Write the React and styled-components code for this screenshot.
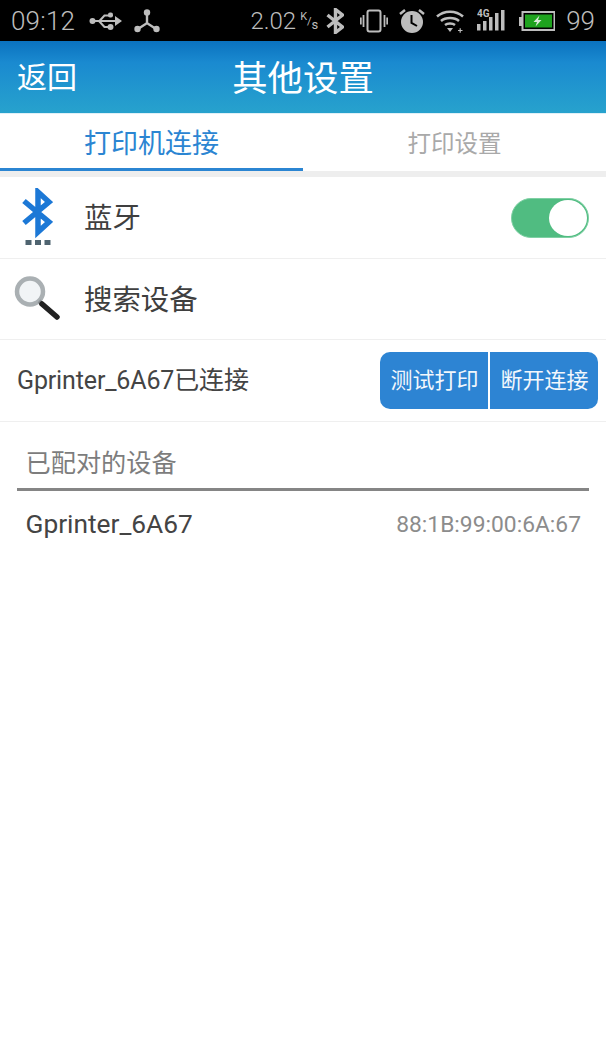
import React from "react";
import styled, { createGlobalStyle } from "styled-components";

const Global = createGlobalStyle`
  html, body { margin: 0; padding: 0; background: #fff; }
  body { font-family: Roboto, "Noto Sans CJK SC", sans-serif; }
  * { box-sizing: border-box; }
`;

const Page = styled.div`
  width: 606px;
  height: 1040px;
  background: #fff;
  overflow: hidden;
  display: flex;
  flex-direction: column;
`;

const StatusBar = styled.div`
  height: 41px;
  flex: none;
  background: #000;
  color: #bdbdbd;
  display: flex;
  align-items: center;
  padding: 0 11px 0 11px;
  font-size: 26px;
  font-weight: 300;
`;
const StatusGroup = styled.div`
  display: flex;
  align-items: center;
`;
const Spacer = styled.div`
  flex: 1;
`;
const Time = styled.span`
  width: 78px;
  letter-spacing: 0.2px;
`;
const Speed = styled.span`
  font-size: 24px;
  margin-right: 4px;
`;
const SpeedUnit = styled.span`
  font-size: 11px;
  font-weight: 400;
  width: 18px;
  margin-right: 8px;
`;
const UnitK = styled.span`
  vertical-align: 5px;
`;
const UnitS = styled.span`
  vertical-align: -4px;
  font-size: 13px;
`;
const Battery = styled.span`
  margin-left: 11px;
`;
const StatusIcon = styled.svg`
  display: block;
  flex: none;
  margin-left: ${p => p.$ml || 0}px;
`;

const Header = styled.header`
  height: 72px;
  flex: none;
  background: linear-gradient(#0a72bf, #1a8ad0 30%, #27a2cd);
  color: #fff;
  display: grid;
  grid-template-columns: 1fr auto 1fr;
  align-items: center;
  padding: 0 17px;
`;
const Back = styled.span`
  font-size: 30px;
  line-height: 74px;
`;
const Title = styled.h1`
  margin: 0 0 5px;
  font-size: 35.4px;
  font-weight: 400;
`;

const Tabs = styled.div`
  display: flex;
  flex: none;
  height: 64px;
  border-top: 1px solid #dff0f7;
  border-bottom: 6px solid #eeeeee;
`;
const Tab = styled.div`
  flex: 1;
  display: flex;
  align-items: center;
  justify-content: center;
  font-size: ${p => (p.$active ? 27 : 23.5)}px;
  color: ${p => (p.$active ? "#2b85d2" : "#a9a9a9")};
  border-bottom: 3px solid ${p => (p.$active ? "#2b85d2" : "transparent")};
  padding-top: 1px;
`;

const Row = styled.div`
  display: flex;
  flex: none;
  align-items: center;
  height: ${p => p.$h || 81}px;
  border-bottom: 1px solid #efefef;
  padding: 0 ${p => p.$pr ?? 17}px 0 ${p => p.$pl ?? 0}px;
`;
const IconSlot = styled.div`
  width: 85px;
  flex: none;
  display: flex;
  padding-left: ${p => p.$pl}px;
`;
const RowLabel = styled.span`
  font-size: 28.4px;
  color: #3f3f3f;
  flex: 1;
  margin-left: -1px;
  padding-bottom: ${p => p.$pb || 0}px;
`;
const Status = styled.span`
  font-size: 25px;
  letter-spacing: -0.14px;
  color: #444;
  flex: 1;
  padding-bottom: 5px;
`;
const Toggle = styled.div`
  width: 78px;
  height: 40px;
  border-radius: 20px;
  background: #50bc81;
  border: 1px solid #7fd0a4;
  padding: 1px;
  display: flex;
  justify-content: flex-end;
`;
const Knob = styled.div`
  width: 38px;
  height: 36px;
  border-radius: 50%;
  background: #fff;
`;
const ButtonGroup = styled.div`
  display: flex;
  gap: 2px;
`;
const ActionButton = styled.button`
  width: 108px;
  height: 57px;
  border: 0;
  padding: 0 0 5px 1px;
  background: #2d84d3;
  color: #f2f7fc;
  font-family: inherit;
  font-size: 22px;
  border-radius: ${p => (p.$first ? "10px 0 0 10px" : "0 10px 10px 0")};
`;

const Section = styled.section`
  padding: 0 17px;
`;
const SectionTitle = styled.div`
  height: 69px;
  border-bottom: 3px solid #858585;
  padding: 22px 0 0 8.500px;
  font-size: 25.200px;
  line-height: 40px;
  color: #7d7d7d;
`;
const Device = styled.div`
  display: flex;
  justify-content: space-between;
  align-items: center;
  height: 66px;
  padding: 0 8px 0 8.500px;
`;
const DeviceName = styled.span`
  font-size: 26.300px;
  color: #444;
`;
const Mac = styled.span`
  font-size: 22.800px;
  color: #8c8c8c;
`;

export default function App() {
  return (
    <Page>
      <Global />
      <StatusBar>
        <StatusGroup>
          <Time>09:12</Time>
          <StatusIcon width="34" height="22" viewBox="0 0 34 22" fill="#bdbdbd">
            <circle cx="3.500" cy="11" r="3" />
            <path d="M3 10h24v2H3z" />
            <path d="M26 6l7 5-7 5z" />
            <path d="M9 11l6-6.500h5v2h-4l-5 5.500zM11 10.500l5 5.500h4v2h-5l-6-6.500z" />
            <rect x="19" y="2.500" width="5" height="5" rx="2" />
            <circle cx="21.500" cy="17" r="3" />
          </StatusIcon>
          <StatusIcon width="26" height="24" viewBox="0 0 26 24" $ml={11} fill="#bdbdbd">
            <circle cx="13" cy="3.500" r="3.200" />
            <circle cx="3.500" cy="20" r="3.200" />
            <circle cx="22.500" cy="20" r="3.200" />
            <path d="M11.800 4h2.400v9.500l8.500 5.500-1.300 2-8.400-5.400-8.400 5.400-1.300-2 8.500-5.500z" />
          </StatusIcon>
        </StatusGroup>
        <Spacer />
        <StatusGroup>
          <Speed>2.02</Speed>
          <SpeedUnit><UnitK>K</UnitK>/<UnitS>s</UnitS></SpeedUnit>
          <StatusIcon width="18" height="26" viewBox="0 0 18 26" fill="none" stroke="#bdbdbd" strokeWidth="3.400">
            <path d="M1.500 7l15 12-7 5.500V1.500l7 5.500-15 12" />
          </StatusIcon>
          <StatusIcon width="28" height="24" viewBox="0 0 28 24" $ml={16} fill="none" stroke="#bdbdbd" strokeWidth="2">
            <rect x="7.500" y="1.500" width="13" height="21" rx="2" />
            <path d="M3.500 6v12M0.800 8.500v7M24.500 6v12M27.200 8.500v7" strokeWidth="1.800" />
          </StatusIcon>
          <StatusIcon width="26" height="26" viewBox="0 0 26 26" $ml={11} fill="#bdbdbd">
            <circle cx="13" cy="14" r="11" />
            <path d="M12.500 7v7.800l5.500 3.200" fill="none" stroke="#000" strokeWidth="2" />
            <path d="M1 6l5-4M25 6l-5-4" fill="none" stroke="#bdbdbd" strokeWidth="2.500" />
          </StatusIcon>
          <StatusIcon width="28" height="24" viewBox="0 0 28 24" $ml={11} fill="none" stroke="#bdbdbd" strokeWidth="2.500">
            <path d="M1 7.500c7-6.500 19-6.500 26 0M5 12c4.500-4 13.500-4 18 0M9 16c2.500-2 7.500-2 10 0" />
            <path d="M11 19h6l-3 4z" fill="#bdbdbd" stroke="none" />
            <path d="M22 21.500h4.500M24.200 19.200v4.500" strokeWidth="1.200" />
          </StatusIcon>
          <StatusIcon width="30" height="24" viewBox="0 0 30 24" $ml={13} fill="#bdbdbd">
            <text x="0" y="8" fontSize="10" fontWeight="700" fontFamily="Roboto, sans-serif">4G</text>
            <rect x="0" y="15" width="3.500" height="6.500" />
            <rect x="6" y="12" width="3.500" height="9.500" />
            <rect x="12" y="8" width="3.500" height="13.500" />
            <rect x="18" y="4" width="3.500" height="17.500" />
            <rect x="24" y="1" width="3.500" height="20.500" />
          </StatusIcon>
          <StatusIcon width="36" height="20" viewBox="0 0 36 20" $ml={12}>
            <rect x="0" y="6" width="3" height="9" fill="#bdbdbd" />
            <rect x="3.500" y="1" width="32" height="18" fill="none" stroke="#bdbdbd" strokeWidth="2" />
            <rect x="6" y="3.500" width="27" height="13" fill="#1ea31e" />
            <path d="M20.500 4.500l-6 6.500h3.500l-1.500 4.500 6-6.500h-3.500z" fill="#d8e8d8" />
          </StatusIcon>
          <Battery>99</Battery>
        </StatusGroup>
      </StatusBar>
      <Header>
        <Back>返回</Back>
        <Title>其他设置</Title>
        <span />
      </Header>
      <Tabs>
        <Tab $active>打印机连接</Tab>
        <Tab>打印设置</Tab>
      </Tabs>
      <Row $h={82}>
        <IconSlot $pl={21}>
          <svg width="32" height="60" viewBox="0 0 32 60" fill="none">
            <path d="M3 13l25 21-11 10V4l11 10L3 35" stroke="#1c78d6" strokeWidth="5.500" />
            <rect x="4.500" y="52" width="6" height="5" fill="#4f6470" />
            <rect x="14" y="52" width="6" height="5" fill="#4f6470" />
            <rect x="23.500" y="52" width="6" height="5" fill="#4f6470" />
          </svg>
        </IconSlot>
        <RowLabel $pb={4}>蓝牙</RowLabel>
        <Toggle><Knob /></Toggle>
      </Row>
      <Row>
        <IconSlot $pl={14}>
          <svg width="48" height="48" viewBox="0 0 48 48">
            <circle cx="16" cy="16.500" r="13" fill="#f1f4f6" stroke="#aab0b3" strokeWidth="4.500" />
            <path d="M25 26l3 3" stroke="#8a8f92" strokeWidth="4" />
            <path d="M28 29l15 13" stroke="#222" strokeWidth="5.500" strokeLinecap="round" />
          </svg>
        </IconSlot>
        <RowLabel $pb={4}>搜索设备</RowLabel>
      </Row>
      <Row $pl={17} $pr={8} $h={82}>
        <Status>Gprinter_6A67已连接</Status>
        <ButtonGroup>
          <ActionButton $first>测试打印</ActionButton>
          <ActionButton>断开连接</ActionButton>
        </ButtonGroup>
      </Row>
      <Section>
        <SectionTitle>已配对的设备</SectionTitle>
        <Device>
          <DeviceName>Gprinter_6A67</DeviceName>
          <Mac>88:1B:99:00:6A:67</Mac>
        </Device>
      </Section>
    </Page>
  );
}
